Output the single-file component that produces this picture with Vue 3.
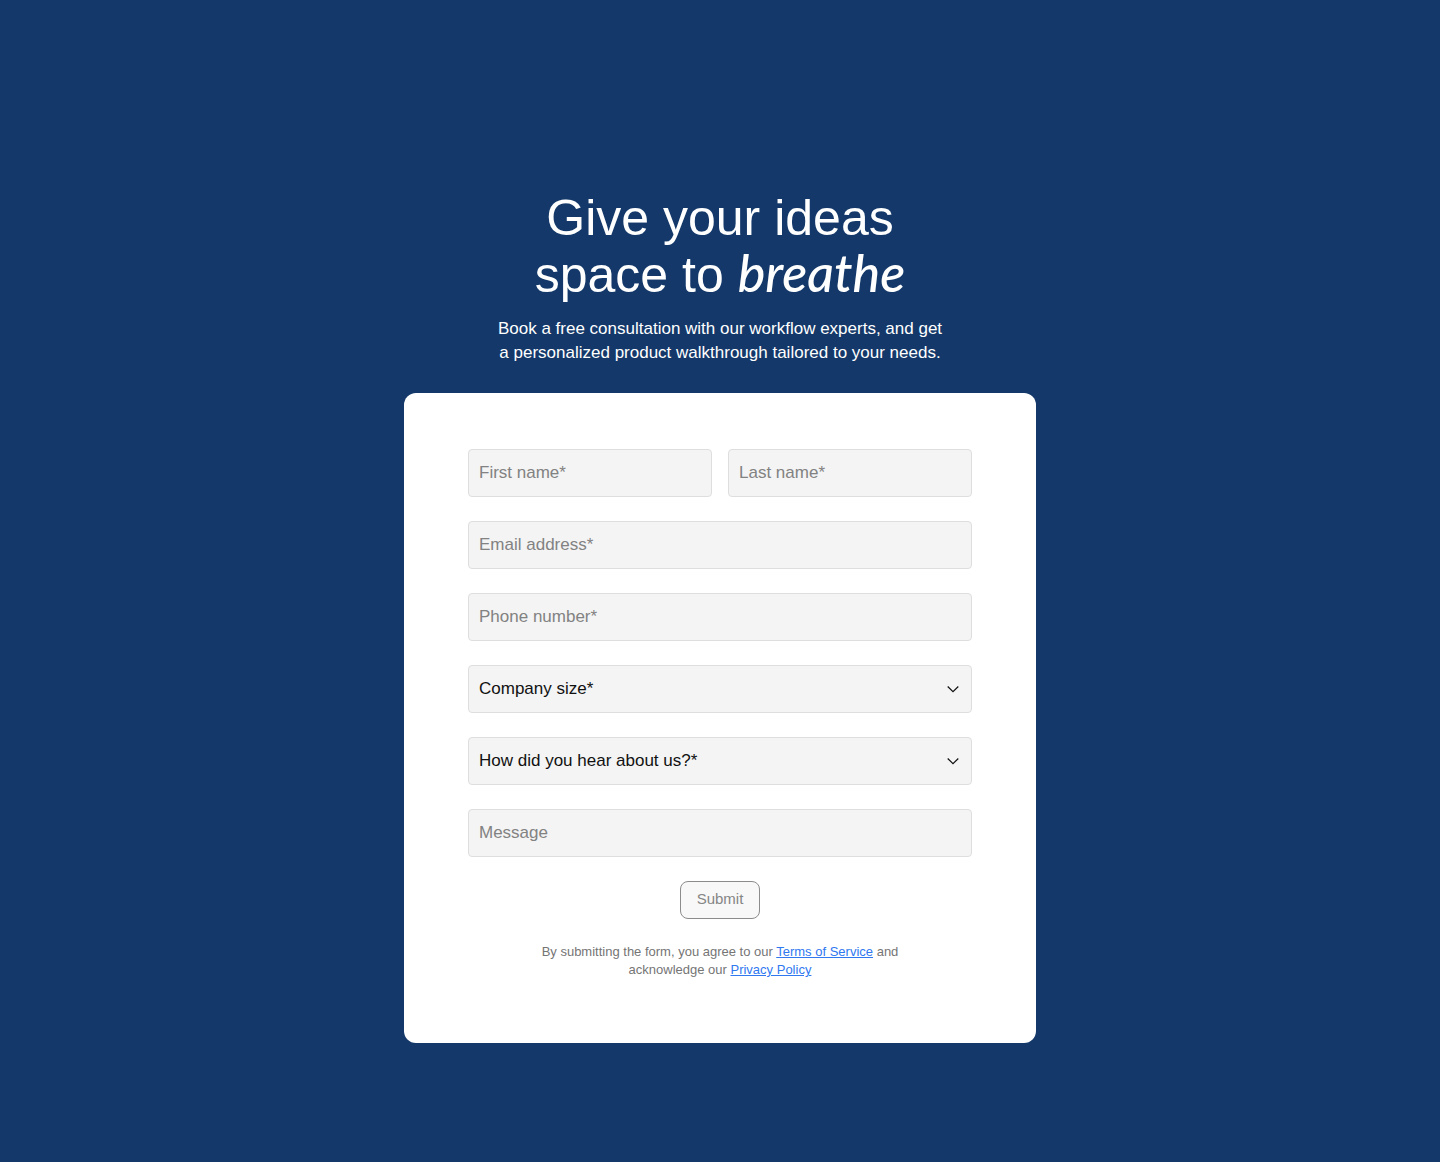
<script setup>
import { ref } from "vue";

const form = ref({
  firstName: "",
  lastName: "",
  email: "",
  phone: "",
  companySize: "",
  source: "",
  message: "",
});

const fields = [
  { id: "firstName", label: "First name*", type: "text", half: true },
  { id: "lastName", label: "Last name*", type: "text", half: true },
  { id: "email", label: "Email address*", type: "email" },
  { id: "phone", label: "Phone number*", type: "tel" },
  {
    id: "companySize",
    label: "Company size*",
    options: ["1-10", "11-50", "51-200", "201-1000", "1000+"],
  },
  {
    id: "source",
    label: "How did you hear about us?*",
    options: ["Search engine", "Social media", "Friend or colleague", "Other"],
  },
  { id: "message", label: "Message", type: "textarea" },
];
</script>

<template>
  <main class="page">
    <header class="intro">
      <h1 class="intro__title">
        Give your ideas<br />
        space to <em>breathe</em>
      </h1>
      <p class="intro__text">
        Book a free consultation with our workflow experts, and get
        a&nbsp;personalized product walkthrough tailored to your needs.
      </p>
    </header>

    <form class="card" @submit.prevent>
      <div class="fields">
        <div
          v-for="field in fields"
          :key="field.id"
          class="field"
          :class="{ field_half: field.half }"
        >
          <template v-if="field.options">
            <select
              v-model="form[field.id]"
              :name="field.id"
              :aria-label="field.label"
              class="field__control field__select"
            >
              <option value="">{{ field.label }}</option>
              <option v-for="option in field.options" :key="option">
                {{ option }}
              </option>
            </select>
            <svg class="field__arrow" viewBox="0 0 12 8" aria-hidden="true">
              <path d="M0.7 1.5 L6 6.6 L11.3 1.5" />
            </svg>
          </template>
          <textarea
            v-else-if="field.type === 'textarea'"
            v-model="form[field.id]"
            :name="field.id"
            :aria-label="field.label"
            :placeholder="field.label"
            rows="1"
            class="field__control field__message"
          ></textarea>
          <input
            v-else
            v-model="form[field.id]"
            :name="field.id"
            :type="field.type"
            :aria-label="field.label"
            :placeholder="field.label"
            class="field__control"
          />
        </div>
      </div>

      <button type="submit" class="submit_btn" disabled>Submit</button>

      <p class="legal">
        By submitting the form, you agree to our
        <a href="#terms">Terms of Service</a> and acknowledge our
        <a href="#privacy">Privacy Policy</a>
      </p>
    </form>
  </main>
</template>

<style>
body {
  background-color: #133869;
}
</style>

<style scoped>
.page {
  box-sizing: border-box;
  min-height: 100vh;
  padding: 190px 24px 120px;
  display: flex;
  flex-direction: column;
  align-items: center;
  gap: 28px;
  background-color: #133869;
  font-family: "Liberation Sans", Arial, sans-serif;
}

.intro {
  display: grid;
  gap: 14px;
  justify-items: center;
  text-align: center;
  color: white;
}

.intro__title {
  margin: 0;
  font-size: 50px;
  line-height: 56px;
  font-weight: 400;
}

.intro__title em {
  font-family: Lato, "Liberation Sans", sans-serif;
  font-size: 52px;
  font-weight: 500;
  line-height: 1;
}

.intro__text {
  margin: 0;
  max-width: 456px;
  font-size: 17px;
  line-height: 24px;
}

.card {
  box-sizing: border-box;
  width: 100%;
  max-width: 632px;
  padding: 56px 64px 64px;
  display: flex;
  flex-direction: column;
  align-items: center;
  gap: 24px;
  background-color: white;
  border-radius: 12px;
}

.fields {
  width: 100%;
  display: grid;
  grid-template-columns: repeat(2, 1fr);
  gap: 24px 16px;
}

.field {
  position: relative;
  display: grid;
  grid-column: span 2;
}

.field_half {
  grid-column: span 1;
}

.field__control {
  box-sizing: border-box;
  width: 100%;
  min-width: 0;
  height: 48px;
  margin: 0;
  padding: 0 10px;
  border: 1px solid #dedede;
  border-radius: 4px;
  background-color: #f4f4f4;
  color: #111111;
  font-family: inherit;
  font-size: 17px;
  line-height: 24px;
}

.field__control::placeholder {
  color: #828282;
  opacity: 1;
}

.field__select {
  appearance: none;
  padding-right: 40px;
}

.field__message {
  padding: 11px 10px;
  resize: none;
}

.field__arrow {
  position: absolute;
  top: 20px;
  right: 13px;
  width: 12px;
  height: 8px;
  fill: none;
  stroke: #111111;
  stroke-width: 1.2;
  pointer-events: none;
}

.submit_btn {
  padding: 8px 16px 10px;
  border: 1px solid #8c8c8c;
  border-radius: 8px;
  background-color: #f8f8f8;
  color: #858585;
  font-family: inherit;
  font-size: 15px;
  line-height: 18px;
}

.legal {
  margin: 0;
  max-width: 360px;
  text-align: center;
  color: #757575;
  font-size: 13px;
  line-height: 18px;
}

.legal a {
  color: #2f78f0;
}
</style>
